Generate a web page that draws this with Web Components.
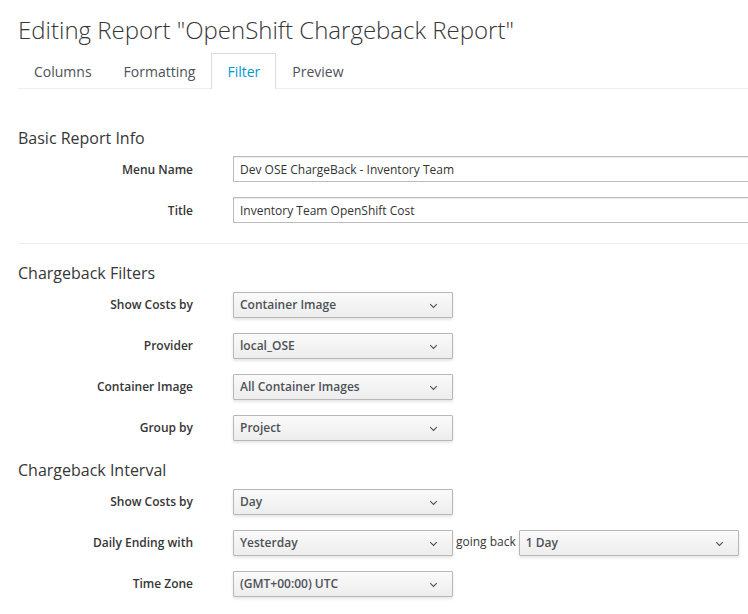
<!DOCTYPE html>
<html lang="en">
<head>
<meta charset="utf-8">
<title>Editing Report</title>
<style>
  body { margin: 0; background: #fff; color: #363636; font: 12px/20px "Open Sans", "Noto Sans", sans-serif; overflow-x: hidden; }
</style>
</head>
<body>
<report-editor>
  <span slot="title">Editing Report "OpenShift Chargeback Report"</span>
  <tab-bar slot="tabs">
    <tab-link name="columns">Columns</tab-link>
    <tab-link name="formatting">Formatting</tab-link>
    <tab-link name="filter" active>Filter</tab-link>
    <tab-link name="preview">Preview</tab-link>
  </tab-bar>
  <form-section heading="Basic Report Info" divided>
    <text-field label="Menu Name" value="Dev OSE ChargeBack - Inventory Team"></text-field>
    <text-field label="Title" value="Inventory Team OpenShift Cost"></text-field>
  </form-section>
  <form-section heading="Chargeback Filters">
    <select-field label="Show Costs by" value="Container Image"></select-field>
    <select-field label="Provider" value="local_OSE"></select-field>
    <select-field label="Container Image" value="All Container Images"></select-field>
    <select-field label="Group by" value="Project"></select-field>
  </form-section>
  <form-section heading="Chargeback Interval">
    <select-field label="Show Costs by" value="Day"></select-field>
    <select-field label="Daily Ending with" value="Yesterday">
      <select-field inline label="going back" value="1 Day"></select-field>
    </select-field>
    <select-field label="Time Zone" value="(GMT+00:00) UTC"></select-field>
  </form-section>
</report-editor>
<script>
const ROW = `
  :host { display: grid; grid-template-columns: 175px minmax(0, 1fr); column-gap: 40px; align-items: center; }
  * { box-sizing: border-box; }
  label { text-align: right; font-weight: 600; }`;

function define(name, html, setup) {
  const template = document.createElement('template');
  template.innerHTML = html;
  customElements.define(name, class extends HTMLElement {
    constructor() {
      super();
      this.attachShadow({ mode: 'open' }).append(template.content.cloneNode(true));
    }
    connectedCallback() { if (setup) setup(this, this.shadowRoot); }
  });
}

define('report-editor', `
  <style>
    :host { display: block; padding: 15px 0 15px 18px; }
    h1 { margin: 0 0 9px; font-size: 24px; line-height: 29px; font-weight: 300; }
    form { display: block; margin: 0; padding-top: 39px; }
  </style>
  <h1><slot name="title"></slot></h1>
  <slot name="tabs"></slot>
  <form><slot></slot></form>`);

define('tab-bar', `
  <style>
    :host { display: block; border-bottom: 1px solid #ededed; }
    nav { display: flex; margin-bottom: -1px; }
  </style>
  <nav><slot></slot></nav>`);

define('tab-link', `
  <style>
    :host { display: block; }
    a { display: block; padding: 8px 15px 7px; border: 1px solid transparent; border-bottom: 0; font-size: 14px; line-height: 20px; color: #4d5258; text-decoration: none; }
    :host([active]) a { color: #0099d3; background: #fff; border-color: #ddd; }
  </style>
  <a><slot></slot></a>`, (host, root) => {
  const a = root.querySelector('a');
  a.href = '#' + host.getAttribute('name');
  if (host.hasAttribute('active')) a.setAttribute('aria-current', 'page');
});

define('form-section', `
  <style>
    :host { display: block; padding-bottom: 19px; }
    :host([divided]) { border-bottom: 1px solid #ededed; padding-bottom: 20px; margin-bottom: 19px; }
    h2 { margin: 0 0 8px; font-size: 16px; line-height: 21px; font-weight: 400; }
    :host([divided]) h2 { margin-bottom: 7px; }
    div { display: grid; row-gap: 15px; }
  </style>
  <h2></h2>
  <div><slot></slot></div>`, (host, root) => {
  root.querySelector('h2').textContent = host.getAttribute('heading');
});

define('text-field', `
  <style>${ROW}
    label { padding-top: 2px; }
    input { width: 100%; height: 26px; margin: 0; padding: 2px 6px; border: 1px solid #bbb; border-right: 0; border-radius: 1px 0 0 1px; background: #fff; color: #333; font: inherit; box-shadow: inset 0 1px 1px rgba(0,0,0,.075); }
  </style>
  <label for="control"></label>
  <input id="control" type="text">`, (host, root) => {
  root.querySelector('label').textContent = host.getAttribute('label');
  root.querySelector('input').value = host.getAttribute('value');
});

define('select-field', `
  <style>${ROW}
    :host([inline]) { display: flex; column-gap: 3px; }
    :host([inline]) label { font-weight: 400; white-space: nowrap; padding-bottom: 2px; }
    .controls { display: flex; column-gap: 3px; align-items: center; }
    .box { display: grid; grid-template-columns: 220px; align-items: center; }
    select { grid-area: 1 / 1; appearance: none; width: 100%; height: 26px; margin: 0; padding: 2px 30px 4px 6px; border: 1px solid #b7b7b7; border-radius: 1px; background: linear-gradient(#fafafa, #ededed); color: #4d5258; font: inherit; font-weight: 600; box-shadow: 0 2px 3px rgba(3,3,3,.1); }
    svg { grid-area: 1 / 1; justify-self: end; margin: 2px 15px 0 0; pointer-events: none; }
  </style>
  <label for="control"></label>
  <div class="controls">
    <div class="box">
      <select id="control"><option></option></select>
      <svg width="9" height="6" viewBox="0 0 9 6" aria-hidden="true"><path d="M1.2 1.2 4.5 4.4 7.8 1.2" fill="none" stroke="#4d5258" stroke-width="1.1"/></svg>
    </div>
    <slot></slot>
  </div>`, (host, root) => {
  root.querySelector('label').textContent = host.getAttribute('label');
  root.querySelector('option').textContent = host.getAttribute('value');
});
</script>
</body>
</html>
